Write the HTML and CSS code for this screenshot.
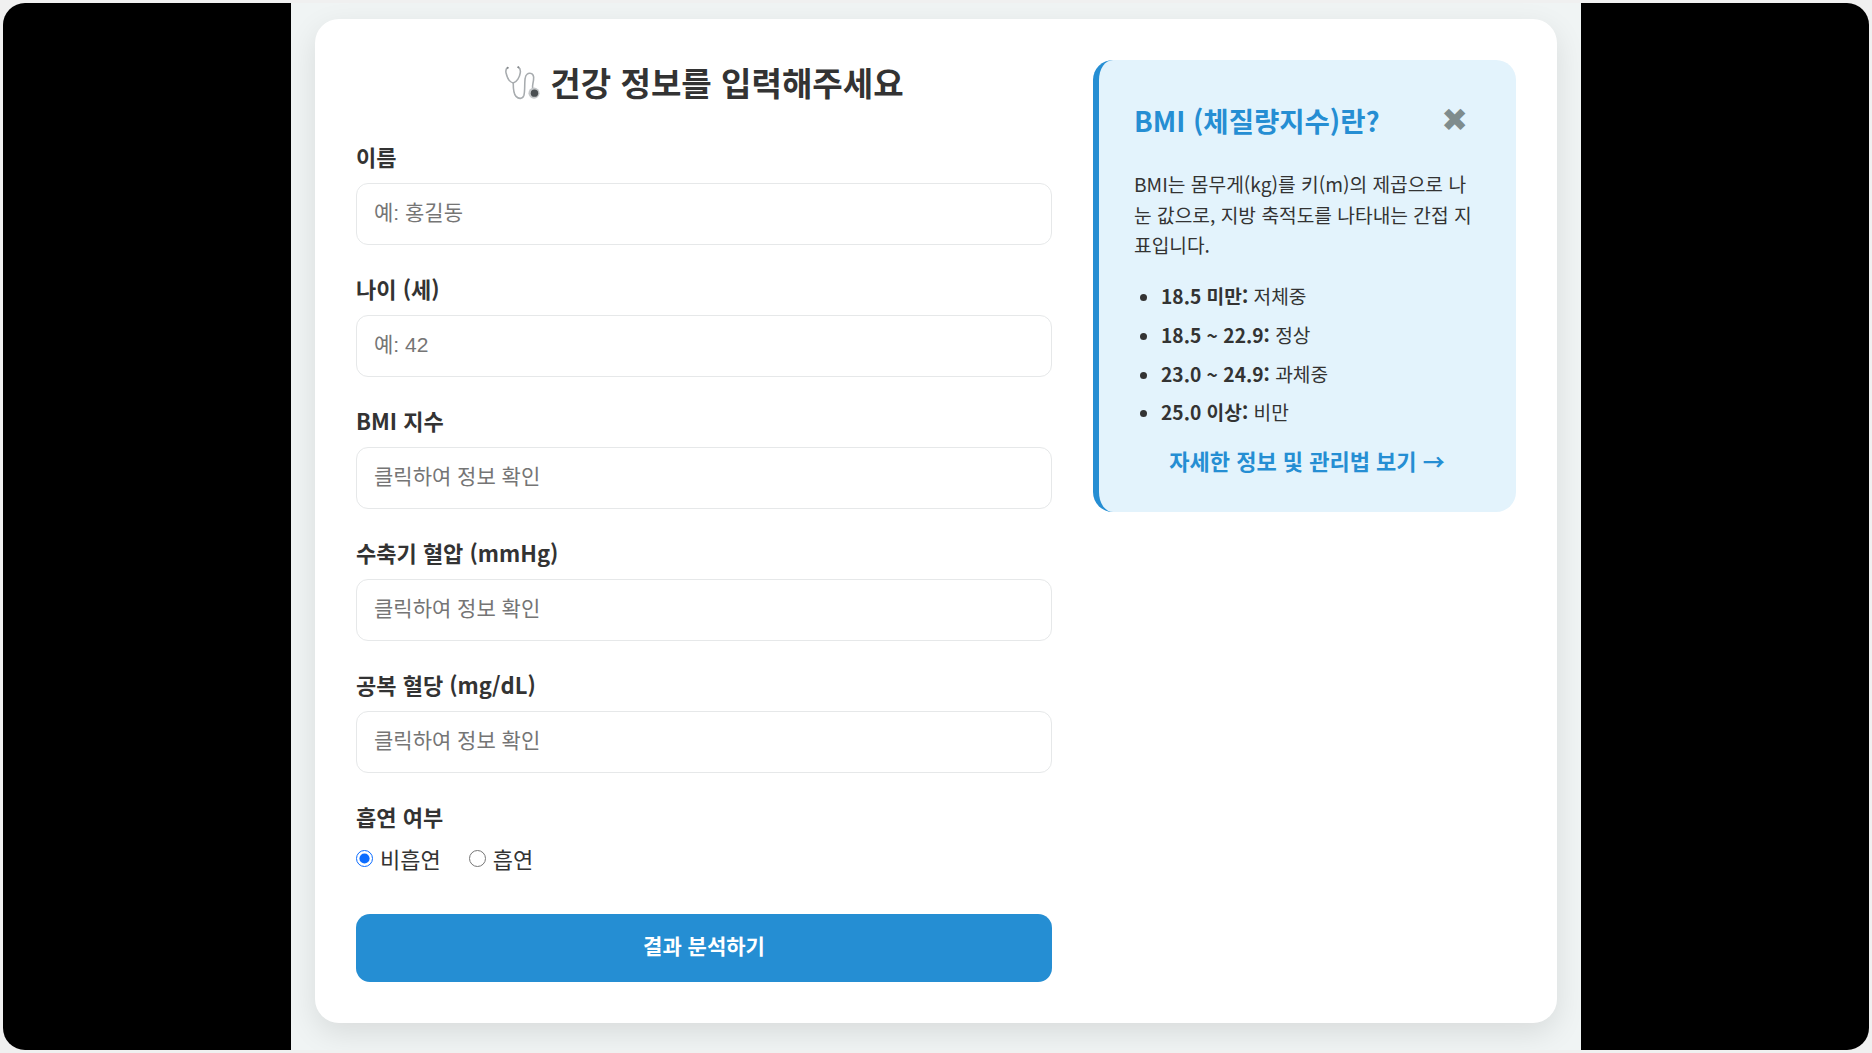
FILE: index.html
```html
<!DOCTYPE html>
<html lang="ko">
<head>
<meta charset="utf-8">
<title>건강 정보 입력</title>
<link rel="stylesheet" href="styles.css">
</head>
<body>
<div class="screen">
  <div class="page">
    <main class="card">
      <form class="form">
        <h1 class="title">
          <svg class="steth" viewBox="5 5 39 39" fill="none" aria-hidden="true">
            <path d="M9 8C7 9 6.700 11 7.200 13.500 8.200 18 11 23.500 15 24.500 19 23.500 22 18 22.600 13.500 23 11 22.500 8.500 20.500 7.500" stroke="#a8acaf" stroke-width="1.700" stroke-linecap="round"/>
            <path d="M15 24.500C15 30 15 36 18 39 21 42 25 42 26.500 38 28 33 27 24 28 19 28.500 15.500 31 13.500 33.500 14 36.500 14.500 37.500 17.500 37 21 36.500 25 35.500 28 36 30" stroke="#a8acaf" stroke-width="1.700" stroke-linecap="round"/>
            <circle cx="37.500" cy="35.500" r="6" fill="#c4c7c9"/>
            <circle cx="38" cy="35.500" r="4" fill="#4a4e51"/>
            <circle cx="9" cy="8" r="1.100" fill="#84888b"/>
            <circle cx="20.500" cy="7.500" r="1.100" fill="#84888b"/>
          </svg>
          건강 정보를 입력해주세요
        </h1>
        <div class="field">
          <label class="label" for="name">이름</label>
          <input class="input" id="name" type="text" placeholder="예: 홍길동">
        </div>
        <div class="field">
          <label class="label" for="age">나이 (세)</label>
          <input class="input" id="age" type="text" placeholder="예: 42">
        </div>
        <div class="field">
          <label class="label" for="bmi">BMI 지수</label>
          <input class="input" id="bmi" type="text" placeholder="클릭하여 정보 확인">
        </div>
        <div class="field">
          <label class="label" for="sbp">수축기 혈압 (mmHg)</label>
          <input class="input" id="sbp" type="text" placeholder="클릭하여 정보 확인">
        </div>
        <div class="field">
          <label class="label" for="fbs">공복 혈당 (mg/dL)</label>
          <input class="input" id="fbs" type="text" placeholder="클릭하여 정보 확인">
        </div>
        <div class="field field-radio">
          <span class="label">흡연 여부</span>
          <div class="radios">
            <label class="radio"><input type="radio" name="smoke" checked>비흡연</label>
            <label class="radio"><input type="radio" name="smoke">흡연</label>
          </div>
        </div>
        <button class="submit" type="button">결과 분석하기</button>
      </form>
      <aside class="info">
        <div class="info-head">
          <h2 class="info-title">BMI (체질량지수)란?</h2>
          <span class="close">✖</span>
        </div>
        <p class="info-text">BMI는 몸무게(kg)를 키(m)의 제곱으로 나눈 값으로, 지방 축적도를 나타내는 간접 지표입니다.</p>
        <ul class="info-list">
          <li><strong>18.5 미만:</strong> 저체중</li>
          <li><strong>18.5 ~ 22.9:</strong> 정상</li>
          <li><strong>23.0 ~ 24.9:</strong> 과체중</li>
          <li><strong>25.0 이상:</strong> 비만</li>
        </ul>
        <a class="info-link" href="#">자세한 정보 및 관리법 보기 →</a>
      </aside>
    </main>
  </div>
</div>
</body>
</html>
```

FILE: styles.css
```css
* { box-sizing: border-box; }
html, body { margin: 0; height: 100%; }
body {
  background: #f0f0f0;
  padding: 3px;
  font-family: "Noto Sans CJK KR", "Noto Sans", sans-serif;
  color: #333;
  overflow: hidden;
}
.screen {
  height: 1047px;
  background: #000;
  border-radius: 22px;
  display: flex;
  justify-content: center;
  overflow: hidden;
}
.page {
  width: 1290px;
  background: #f0f4f4;
  padding: 16px 24px 0;
}
.card {
  height: 1004px;
  background: #fff;
  border-radius: 24px;
  box-shadow: 0 10px 30px rgba(0, 0, 0, 0.1);
  padding: 41px;
  display: grid;
  grid-template-columns: 696px 423px;
  column-gap: 41px;
  align-items: start;
}
.title {
  margin: 0 0 36px;
  height: 45px;
  display: flex;
  align-items: center;
  justify-content: center;
  gap: 10px;
  font-size: 33.100px;
  line-height: 45px;
  font-weight: 700;
  color: #333;
}
.steth { width: 36px; height: 36px; flex: none; }
.field { margin-bottom: 28px; }
.label {
  display: block;
  height: 32px;
  margin-bottom: 10px;
  font-size: 22px;
  line-height: 30px;
  font-weight: 700;
  color: #333;
}
.input {
  display: block;
  width: 100%;
  height: 62px;
  padding: 0 17px 2px;
  border: 1px solid #e6e8e9;
  border-radius: 12px;
  background: #fff;
  font-family: "Liberation Sans", "Noto Sans CJK KR", sans-serif;
  font-size: 21px;
}
.input::placeholder { color: #757575; opacity: 1; }
.field-radio { margin-bottom: 36px; }
.radios { display: flex; gap: 28px; height: 35px; align-items: center; padding-bottom: 5px; }
.radio {
  display: flex;
  align-items: center;
  gap: 7px;
  font-family: "Liberation Sans", "Noto Sans CJK KR", sans-serif;
  font-size: 22px;
  color: #333;
}
.radio input { width: 17px; height: 17px; margin: 0; accent-color: #0b6cff; }
.submit {
  display: block;
  width: 100%;
  height: 68px;
  border: 0;
  border-radius: 14px;
  background: #258ed3;
  color: #fff;
  font-family: inherit;
  font-size: 21px;
  font-weight: 700;
  padding: 0 0 6px;
}
.info {
  background: #e3f3fc;
  border-left: 6px solid #258ed3;
  border-radius: 20px;
  padding: 37px 40px 36px 35px;
  height: 452px;
}
.info-head {
  display: flex;
  justify-content: space-between;
  align-items: center;
  height: 46px;
  padding-right: 8px;
  margin-bottom: 26px;
}
.info-title {
  margin: 0;
  font-size: 27.500px;
  font-weight: 700;
  color: #258ed3;
}
.close {
  font-family: "DejaVu Sans", sans-serif;
  font-size: 32px;
  line-height: 1;
  color: #7f8c8d;
}
.info-text {
  margin: 0 0 20px;
  font-size: 19.200px;
  line-height: 30.720px;
  color: #333;
}
.info-list { margin: 0; padding: 0 0 0 27px; }
.info-list li {
  font-size: 19.200px;
  line-height: 30.720px;
  margin-bottom: 8px;
}
.info-list strong { font-weight: 700; }
.info-link {
  display: block;
  margin-top: 16px;
  padding-left: 4px;
  text-align: center;
  font-size: 22px;
  line-height: 32px;
  font-weight: 700;
  color: #258ed3;
  text-decoration: none;
}
```
